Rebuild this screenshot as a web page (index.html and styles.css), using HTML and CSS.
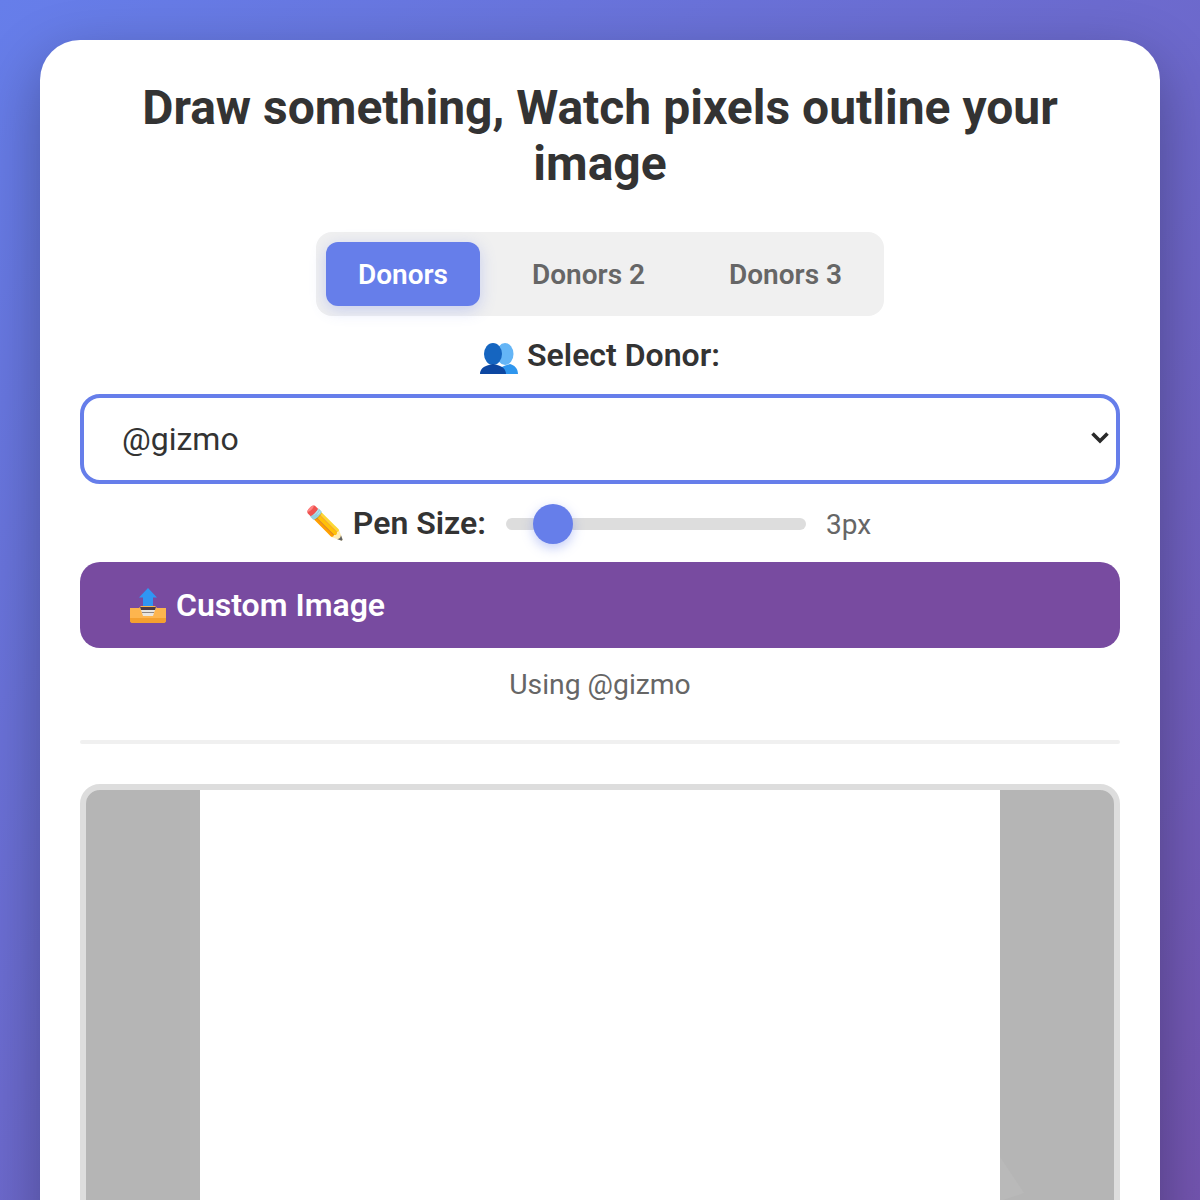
FILE: index.html
```html
<!DOCTYPE html>
<html lang="en">
<head>
<meta charset="utf-8">
<title>Draw something</title>
<link rel="stylesheet" href="styles.css">
</head>
<body>
<main class="card">
  <h1 class="title">Draw something, Watch pixels outline your image</h1>
  <div class="tabs">
    <button class="tab tab-active">Donors</button>
    <button class="tab">Donors 2</button>
    <button class="tab">Donors 3</button>
  </div>
  <label class="field-label" for="donor">
    <svg class="icon-people" viewBox="0 0 38 36" aria-hidden="true">
      <ellipse cx="25" cy="16" rx="8.5" ry="11" fill="#64b5f6"/>
      <path d="M18 36c0-5 4-8 9-9l3-1c4 1 8 4 8 10z" fill="#2f96ee"/>
      <ellipse cx="13" cy="16" rx="9" ry="11" fill="#1565c0"/>
      <path d="M0 36c0-5 4-8 9-9l4-1 4 1c5 1 9 4 9 9z" fill="#0d47a1"/>
    </svg>
    <span>Select Donor:</span>
  </label>
  <div class="select-wrap">
    <select class="donor-select" id="donor">
      <option>@gizmo</option>
    </select>
    <svg class="chevron" viewBox="0 0 20 14" aria-hidden="true">
      <path d="M2.5 2.5 10 10l7.500-7.500" fill="none" stroke="#2a2a2a" stroke-width="3.600"/>
    </svg>
  </div>
  <div class="pen-row">
    <label class="pen-label" for="pen">✏️ Pen Size:</label>
    <input class="pen-range" id="pen" type="range" min="1" max="20" value="3">
    <span class="pen-value">3px</span>
  </div>
  <button class="upload">
    <svg class="icon-tray" viewBox="0 0 38 37" aria-hidden="true">
      <path d="M19 1 28 10.500H24V20H14V10.500H10z" fill="#2f96f3"/>
      <path d="M1 21H10L12 19H26L28 21H37V33Q37 36 34 36H4Q1 36 1 33z" fill="#fdb54e"/>
      <path d="M1 33Q1 36 4 36H34Q37 36 37 33V31H1z" fill="#f4a02f"/>
      <path d="M11 20H27L24 29H14z" fill="#e9e6df"/>
      <path d="M11 20H27L26 23H12z" fill="#4a3a44"/>
      <path d="M13 25.500H25" stroke="#8d8682" stroke-width="1"/>
    </svg>
    <span>Custom Image</span>
  </button>
  <p class="status">Using @gizmo</p>
  <hr class="divider">
  <div class="stage">
    <div class="canvas"></div>
    <svg class="glare" viewBox="0 0 58 44" aria-hidden="true">
      <path d="M0 0 24 36 0 44z" fill="#b9b9b9"/>
    </svg>
  </div>
</main>
</body>
</html>
```
FILE: styles.css
```css
* { box-sizing: border-box; }
body {
  margin: 0;
  padding: 40px;
  background: linear-gradient(135deg, #667eea 0%, #764ba2 100%);
  font-family: Roboto, "Noto Color Emoji", sans-serif;
  color: #333;
}
.card {
  background: #fff;
  border-radius: 40px;
  padding: 40px;
  display: flex;
  flex-direction: column;
  align-items: center;
  box-shadow: 0 20px 60px rgba(0, 0, 0, 0.3);
}
.title {
  margin: 0 0 40px;
  font-size: 48px;
  line-height: 56px;
  font-weight: 700;
  text-align: center;
  color: #333;
}
.tabs {
  display: flex;
  gap: 20px;
  padding: 10px;
  background: #f0f0f0;
  border-radius: 16px;
  margin-bottom: 20px;
}
.tab {
  border: 0;
  background: transparent;
  font-family: inherit;
  font-size: 28px;
  font-weight: 600;
  color: #666;
  padding: 0 32px;
  height: 64px;
  border-radius: 12px;
}
.tab-active {
  background: #667eea;
  color: #fff;
  box-shadow: 0 4px 16px rgba(102, 126, 234, 0.3);
}
.field-label {
  display: flex;
  align-items: center;
  gap: 9px;
  height: 38px;
  font-size: 32px;
  line-height: 38px;
  font-weight: 600;
  margin-bottom: 20px;
}
.icon-people {
  width: 38px;
  height: 36px;
  margin-top: 1px;
}
.select-wrap {
  position: relative;
  width: 100%;
}
.donor-select {
  display: block;
  width: 100%;
  height: 90px;
  padding: 0 38px;
  border: 4px solid #667eea;
  border-radius: 20px;
  background: #fff;
  font-family: inherit;
  font-size: 32px;
  color: #333;
  appearance: none;
  -webkit-appearance: none;
}
.chevron {
  position: absolute;
  right: 10px;
  top: 37px;
  width: 20px;
  height: 14px;
  pointer-events: none;
}
.pen-row {
  display: flex;
  align-items: center;
  justify-content: center;
  gap: 20px;
  width: 100%;
  height: 78px;
}
.pen-label {
  font-size: 32px;
  font-weight: 600;
}
.pen-range {
  appearance: none;
  -webkit-appearance: none;
  width: 300px;
  height: 12px;
  margin: 2px 0 0;
  background: #ddd;
  border-radius: 6px;
  outline: none;
}
.pen-range::-webkit-slider-thumb {
  -webkit-appearance: none;
  width: 40px;
  height: 40px;
  border-radius: 50%;
  background: #667eea;
  box-shadow: 0 4px 12px rgba(102, 126, 234, 0.4);
}
.pen-value {
  margin-top: 2px;
  font-size: 28px;
  color: #666;
  min-width: 69px;
}
.upload {
  display: flex;
  align-items: center;
  gap: 9px;
  width: 100%;
  height: 86px;
  padding: 0 49px;
  border: 0;
  border-radius: 20px;
  background: #784ba0;
  color: #fff;
  font-family: inherit;
  font-size: 32px;
  font-weight: 600;
  text-align: left;
}
.icon-tray {
  width: 38px;
  height: 37px;
}
.status {
  margin: 20px 0 0;
  font-size: 28.3px;
  line-height: 33px;
  color: #666;
}
.divider {
  width: 100%;
  height: 4px;
  margin: 39px 0 40px;
  border: 0;
  border-radius: 2px;
  background: #f0f0f0;
}
.stage {
  position: relative;
  width: 100%;
  height: 886px;
  flex: none;
  display: flex;
  justify-content: center;
  border: 6px solid #ddd;
  border-radius: 20px;
  background: #b5b5b5;
  overflow: hidden;
}
.canvas {
  width: 800px;
  background: #fff;
}
.glare {
  position: absolute;
  left: 914px;
  top: 367px;
  width: 58px;
  height: 44px;
}
```
